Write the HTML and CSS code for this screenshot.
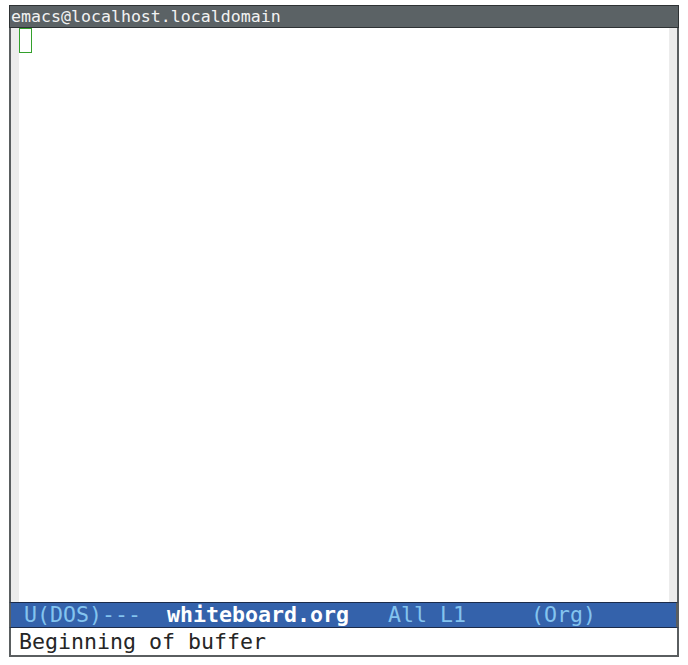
FILE: index.html
```html
<!DOCTYPE html>
<html>
<head>
<meta charset="utf-8">
<link rel="stylesheet" href="styles.css">
</head>
<body>
<div class="frame">
  <div class="titlebar">emacs@localhost.localdomain</div>
  <div class="window">
    <div class="fringe"></div>
    <div class="text"><span class="cursor"></span></div>
    <div class="fringe"></div>
  </div>
  <div class="modeline"><span class="dim"> U(DOS)---  </span><span class="buf">whiteboard.org</span><span class="dim">   All L1     (Org)</span></div>
  <div class="echo">Beginning of buffer</div>
</div>
</body>
</html>
```
FILE: styles.css
```css
html, body {
  margin: 0;
  padding: 0;
  background: #ffffff;
}
.frame {
  margin: 5px 0 0 9px;
  width: 670px;
  display: flex;
  flex-direction: column;
  font-family: "DejaVu Sans Mono", monospace;
}
.titlebar {
  height: 21px;
  background: #5b6265;
  border: 1px solid #2e3234;
  color: #f2f2f2;
  font-size: 16.6px;
  line-height: 21px;
  padding-left: 1px;
  white-space: pre;
  box-sizing: content-box;
  width: 667px;
}
.window {
  display: flex;
  height: 574px;
  border-left: 2px solid #5a5e60;
  border-right: 2px solid #5a5e60;
}
.fringe {
  width: 8px;
  background: #ececec;
}
.text {
  flex: 1;
  background: #ffffff;
}
.cursor {
  display: block;
  width: 11px;
  height: 23px;
  border: 1px solid #33a02c;
}
.modeline {
  height: 24px;
  background: #3462ab;
  border: 1px solid #1b2b4a;
  border-left: 2px solid #5a5e60;
  border-right: 3px solid #5a5e60;
  font-size: 21.6px;
  line-height: 24px;
  white-space: pre;
  color: #84c4ef;
}
.buf {
  color: #ffffff;
  font-weight: bold;
}
.echo {
  height: 27px;
  border-left: 2px solid #5a5e60;
  border-right: 2px solid #5a5e60;
  border-bottom: 2px solid #5a5e60;
  padding-left: 8px;
  font-size: 21.6px;
  line-height: 27px;
  color: #262626;
  white-space: pre;
}
```
